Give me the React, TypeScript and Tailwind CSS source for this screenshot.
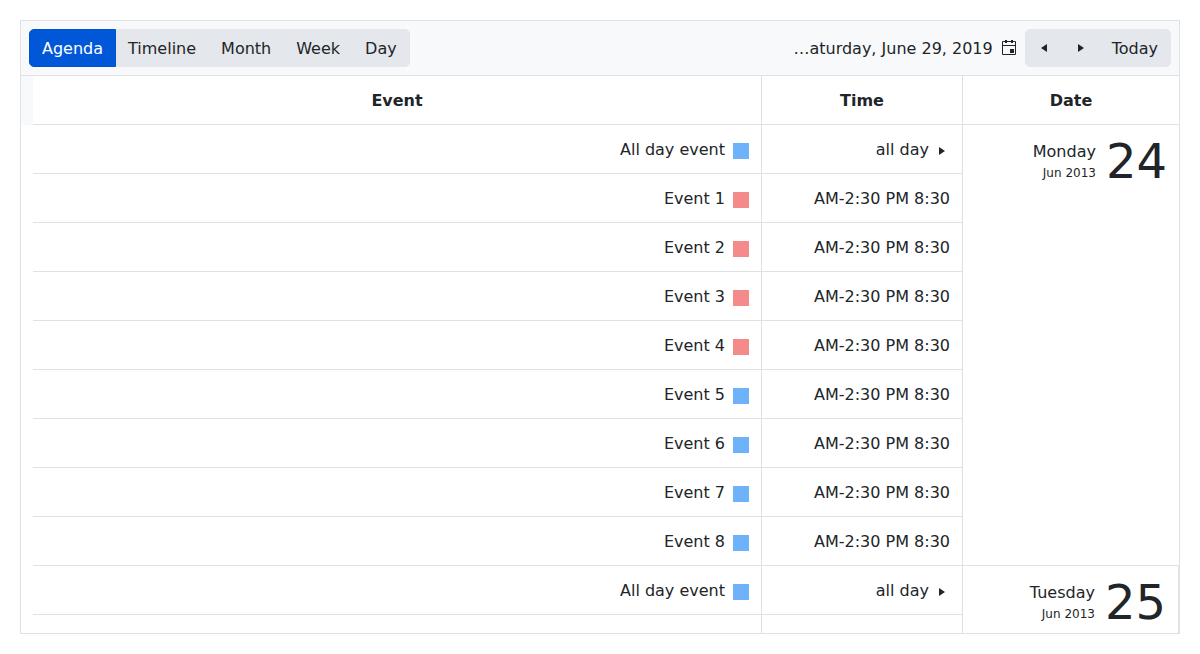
import { Fragment } from "react";
import clsx from "clsx";

type Entry = { title: string; allDay?: boolean; color: "blue" | "red" };
type DayGroup = { weekday: string; month: string; day: string; entries: Entry[] };

const VIEWS = ["Agenda", "Timeline", "Month", "Week", "Day"];

const GROUPS: DayGroup[] = [
  {
    weekday: "Monday",
    month: "Jun 2013",
    day: "24",
    entries: [
      { title: "All day event", allDay: true, color: "blue" },
      { title: "Event 1", color: "red" },
      { title: "Event 2", color: "red" },
      { title: "Event 3", color: "red" },
      { title: "Event 4", color: "red" },
      { title: "Event 5", color: "blue" },
      { title: "Event 6", color: "blue" },
      { title: "Event 7", color: "blue" },
      { title: "Event 8", color: "blue" },
    ],
  },
  {
    weekday: "Tuesday",
    month: "Jun 2013",
    day: "25",
    entries: [{ title: "All day event", allDay: true, color: "blue" }],
  },
];

function CaretIcon({ left, className }: { left?: boolean; className?: string }) {
  return (
    <svg viewBox="0 0 16 16" className={clsx("size-4", className)} fill="currentColor" aria-hidden="true">
      <path d={left ? "M11 4v8L5 8z" : "M5 4v8l6-4z"} />
    </svg>
  );
}

function CalendarIcon() {
  return (
    <svg viewBox="0 0 16 16" className="size-4" fill="currentColor" aria-hidden="true">
      <path
        fillRule="evenodd"
        d="M2 1h12q1 0 1 1v12q0 1-1 1H2q-1 0-1-1V2q0-1 1-1zM2 2v3h12V2zM2 6v8h12V6z"
      />
      <path d="M4 0h2v3H4zM10 0h2v3h-2zM9 9h4v4H9z" />
    </svg>
  );
}

const BUTTON =
  "h-[38px] border px-3 first:rounded-l-[5px] last:rounded-r-[5px] [&:not(:first-child)]:-ml-px";
const LABEL = "pt-0.5";
const PLAIN = "border-[#e4e7eb] bg-[#e4e7eb]";
const CELL = "border-b border-[#dee2e6] px-3 pt-[13px] pb-[11px]";

export default function App() {
  return (
    <div className="h-screen p-5 font-['DejaVu_Sans',sans-serif] text-base leading-6 text-[#212529]">
      <main className="flex h-full flex-col overflow-hidden border border-[#dee2e6] bg-white">
        <header className="flex shrink-0 items-center justify-between border-b border-[#dee2e6] bg-[#f8f9fb] p-2">
          <nav className="flex" aria-label="Views">
            {VIEWS.map((view, i) => (
              <button
                key={view}
                type="button"
                aria-pressed={i === 0}
                className={clsx(BUTTON, LABEL, i === 0 ? "relative border-[#0052cc] bg-[#0058d9] text-white" : PLAIN)}
              >
                {view}
              </button>
            ))}
          </nav>
          <div className="flex items-center gap-2">
            <button type="button" className="flex items-center gap-2">
              <span className={LABEL}>…aturday, June 29, 2019</span>
              <CalendarIcon />
            </button>
            <div className="flex">
              <button type="button" aria-label="Next" className={clsx(BUTTON, PLAIN, "w-[38px] px-[10px]")}>
                <CaretIcon left />
              </button>
              <button type="button" aria-label="Previous" className={clsx(BUTTON, PLAIN, "w-[38px] px-[10px]")}>
                <CaretIcon />
              </button>
              <button type="button" className={clsx(BUTTON, LABEL, PLAIN)}>
                Today
              </button>
            </div>
          </div>
        </header>

        <div className="flex min-h-0 flex-1 items-start overflow-hidden">
          <div className="h-[49px] w-3 shrink-0 bg-[#f8f9fb]" />
          <table className="w-full flex-1 table-fixed border-separate border-spacing-0">
            <colgroup>
              <col />
              <col className="w-[201px]" />
              <col className="w-[217px]" />
            </colgroup>
            <thead>
              <tr>
                <th className={clsx(CELL, "font-bold")}>Event</th>
                <th className={clsx(CELL, "border-l font-bold")}>Time</th>
                <th className={clsx(CELL, "border-l font-bold")}>Date</th>
              </tr>
            </thead>
            <tbody>
              {GROUPS.map((group, g) => (
                <Fragment key={group.day}>
                  {group.entries.map((entry, i) => (
                    <tr key={entry.title}>
                      <td className={clsx(CELL, "text-right")}>
                        {entry.title}
                        <span
                          className={clsx(
                            "ml-2 inline-block size-4 align-text-bottom",
                            entry.color === "blue" ? "bg-[#6eb3fa]" : "bg-[#f58a8a]",
                          )}
                        />
                      </td>
                      <td className={clsx(CELL, "border-l text-right")}>
                        {entry.allDay ? (
                          <>
                            all day <CaretIcon className="inline-block align-text-bottom" />
                          </>
                        ) : (
                          "AM-2:30 PM 8:30"
                        )}
                      </td>
                      {i === 0 && (
                        <td
                          rowSpan={g === 0 ? group.entries.length : 2}
                          className={clsx(
                            "border-b border-l border-[#dee2e6] px-3 py-3 align-top",
                            g > 0 && "border-r",
                          )}
                        >
                          <div className="flex items-start justify-end gap-[10px]">
                            <div className="pt-[3px] text-right">
                              <div>{group.weekday}</div>
                              <div className="text-xs leading-[18px]">{group.month}</div>
                            </div>
                            <div className="text-5xl leading-[48px]">{group.day}</div>
                          </div>
                        </td>
                      )}
                    </tr>
                  ))}
                </Fragment>
              ))}
              <tr>
                <td className="h-[49px] border-b border-[#dee2e6]" />
                <td className="h-[49px] border-b border-l border-[#dee2e6]" />
              </tr>
            </tbody>
          </table>
        </div>
      </main>
    </div>
  );
}
